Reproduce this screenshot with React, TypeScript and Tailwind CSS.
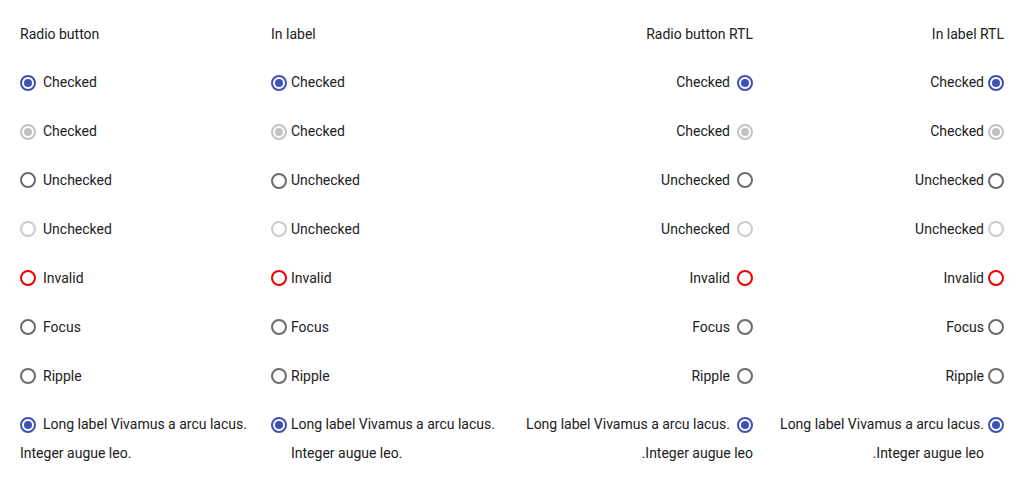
import React from "react";

type Kind = "checked" | "checkedDisabled" | "unchecked" | "uncheckedDisabled" | "invalid";

function Radio({ kind, className = "" }: { kind: Kind; className?: string }) {
  const ring =
    kind === "checked"
      ? "#3f51b5"
      : kind === "checkedDisabled"
      ? "#c2c2c2"
      : kind === "uncheckedDisabled"
      ? "#cccccc"
      : kind === "invalid"
      ? "#f20000"
      : "#6b6b6b";
  const dot = kind === "checked" ? "#3f51b5" : kind === "checkedDisabled" ? "#c2c2c2" : null;
  return (
    <svg width="16" height="16" viewBox="0 0 16 16" className={className}>
      <circle cx="8" cy="8" r="7" fill="none" stroke={ring} strokeWidth="2" />
      {dot && <circle cx="8" cy="8" r="4" fill={dot} />}
    </svg>
  );
}

const rows: { kind: Kind; label: string }[] = [
  { kind: "checked", label: "Checked" },
  { kind: "checkedDisabled", label: "Checked" },
  { kind: "unchecked", label: "Unchecked" },
  { kind: "uncheckedDisabled", label: "Unchecked" },
  { kind: "invalid", label: "Invalid" },
  { kind: "unchecked", label: "Focus" },
  { kind: "unchecked", label: "Ripple" },
];

const LONG = "Long label Vivamus a arcu lacus. Integer augue leo.";

function ColInline({ title, rtl }: { title: string; rtl?: boolean }) {
  return (
    <div dir={rtl ? "rtl" : "ltr"} className="flex flex-col gap-[19.86px]">
      <div className="h-[29px] leading-[29px]">{title}</div>
      {rows.map((r, i) => (
        <div key={i} className="h-[29px] leading-[29px]">
          <Radio kind={r.kind} className="inline-block align-middle me-[7px] -mt-[2px]" />
          {r.label}
        </div>
      ))}
      <div className="leading-[29px]">
        <Radio kind="checked" className="inline-block align-middle me-[7px] -mt-[2px]" />
        {LONG}
      </div>
    </div>
  );
}

function ColLabel({ title, rtl }: { title: string; rtl?: boolean }) {
  return (
    <div dir={rtl ? "rtl" : "ltr"} className="flex flex-col gap-[19.86px]">
      <div className="h-[29px] leading-[29px]">{title}</div>
      {rows.map((r, i) => (
        <label key={i} className="flex h-[29px] items-center gap-1 leading-[29px]">
          <Radio kind={r.kind} className="shrink-0" />
          <span>{r.label}</span>
        </label>
      ))}
      <label className="flex items-start gap-1 leading-[29px]">
        <span className="flex h-[29px] shrink-0 items-center">
          <Radio kind="checked" />
        </span>
        <span>{LONG}</span>
      </label>
    </div>
  );
}

export default function App() {
  return (
    <div
      className="grid h-[487px] w-[1024px] grid-cols-4 gap-x-5 bg-white px-5 pt-[19.5px] text-[14px] text-[#212121]"
      style={{ fontFamily: "Roboto, 'Liberation Sans', sans-serif" }}
    >
      <ColInline title="Radio button" />
      <ColLabel title="In label" />
      <ColInline title="Radio button RTL" rtl />
      <ColLabel title="In label RTL" rtl />
    </div>
  );
}
